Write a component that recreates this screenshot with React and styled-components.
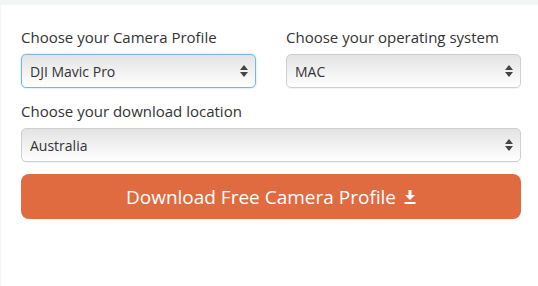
import React from "react";
import styled, { createGlobalStyle } from "styled-components";

const GlobalStyle = createGlobalStyle`
  html, body {
    margin: 0;
    padding: 0;
    background: #f4f5f7;
  }
  body {
    font-family: "Open Sans", "Liberation Sans", sans-serif;
    color: #333;
  }
`;

const Page = styled("div")`
  padding: 5px 0 0 1px;
  height: 286px;
  box-sizing: border-box;
`;

const Panel = styled("div")`
  background: #fff;
  height: 100%;
  padding: 22px 17px 0 20px;
  box-sizing: border-box;
`;

const Row = styled("div")`
  display: grid;
  grid-template-columns: ${({ cols }) => cols || "1fr"};
  column-gap: 30px;
  width: 500px;
`;

const Field = styled("div")`
  display: flex;
  flex-direction: column;
  margin-bottom: ${({ last }) => (last ? "12px" : "13px")};
`;

const Label = styled("label")`
  font-size: 15px;
  line-height: 20px;
  margin-bottom: 7px;
  color: #333;
`;

const SelectWrap = styled("div")`
  position: relative;
`;

const Select = styled("select")`
  appearance: none;
  -webkit-appearance: none;
  width: 100%;
  height: 34px;
  box-sizing: border-box;
  padding: 0 28px 0 8px;
  font-family: "Open Sans", "Liberation Sans", sans-serif;
  font-size: 14px;
  color: #333;
  border: 1px solid ${({ focused }) => (focused ? "#7eb4e4" : "#cfcfcf")};
  border-radius: 5px;
  background: linear-gradient(#e3e3e3, #ffffff);
  box-shadow: ${({ focused }) =>
    focused ? "0 0 2px rgba(102, 170, 230, 0.6)" : "0 1px 1px rgba(0,0,0,0.05)"};
  outline: none;
`;

const Arrows = styled("svg")`
  position: absolute;
  right: 8px;
  top: 11px;
  pointer-events: none;
`;

const Button = styled("button")`
  width: 100%;
  height: 45px;
  border: none;
  border-radius: 8px;
  background: #e06b41;
  color: #fff;
  font-family: "Open Sans", "Liberation Sans", sans-serif;
  font-size: 19px;
  display: flex;
  align-items: center;
  justify-content: center;
  gap: 8px;
  cursor: pointer;
`;

const SelectBox = ({ value, focused }) => (
  <SelectWrap>
    <Select focused={focused} defaultValue={value}>
      <option>{value}</option>
    </Select>
    <Arrows width="8" height="12" viewBox="0 0 8 12">
      <path d="M4 0 L8 5 H0 Z" fill="#444" />
      <path d="M0 7 H8 L4 12 Z" fill="#444" />
    </Arrows>
  </SelectWrap>
);

const DownloadIcon = () => (
  <svg width="12" height="14" viewBox="0 0 12 14">
    <path d="M4.5 0 H7.5 V5 H11 L6 10 L1 5 H4.5 Z" fill="#fff" />
    <rect x="0.5" y="12" width="11" height="2" fill="#fff" />
  </svg>
);

export default function App() {
  return (
    <Page>
      <GlobalStyle />
      <Panel>
        <Row cols="1fr 1fr">
          <Field>
            <Label>Choose your Camera Profile</Label>
            <SelectBox value="DJI Mavic Pro" focused />
          </Field>
          <Field>
            <Label>Choose your operating system</Label>
            <SelectBox value="MAC" />
          </Field>
        </Row>
        <Row>
          <Field last>
            <Label>Choose your download location</Label>
            <SelectBox value="Australia" />
          </Field>
        </Row>
        <Row>
          <Button>
            Download Free Camera Profile <DownloadIcon />
          </Button>
        </Row>
      </Panel>
    </Page>
  );
}
